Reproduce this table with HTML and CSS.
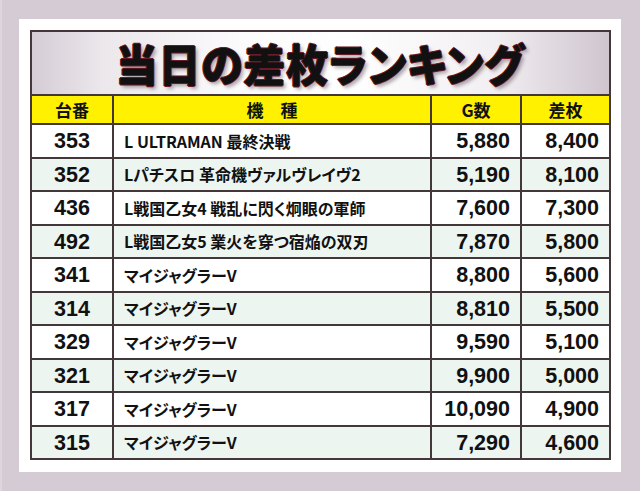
FILE: index.html
```html
<!DOCTYPE html>
<html lang="ja">
<head>
<meta charset="utf-8">
<link rel="stylesheet" href="styles.css">
</head>
<body>
<div class="panel">
  <table class="rank">
    <colgroup>
      <col class="c1"><col class="c2"><col class="c3"><col class="c4">
    </colgroup>
    <thead>
      <tr class="title-row"><th colspan="4" class="title"><span>当日の差枚ランキング</span></th></tr>
      <tr class="head">
        <th>台番</th><th>機　種</th><th>G数</th><th>差枚</th>
      </tr>
    </thead>
    <tbody>
      <tr><td class="no">353</td><td class="name">L ULTRAMAN 最終決戦</td><td class="num">5,880</td><td class="num">8,400</td></tr>
      <tr class="alt"><td class="no">352</td><td class="name">Lパチスロ 革命機ヴァルヴレイヴ2</td><td class="num">5,190</td><td class="num">8,100</td></tr>
      <tr><td class="no">436</td><td class="name">L戦国乙女4 戦乱に閃く炯眼の軍師</td><td class="num">7,600</td><td class="num">7,300</td></tr>
      <tr class="alt"><td class="no">492</td><td class="name">L戦国乙女5 業火を穿つ宿焔の双刃</td><td class="num">7,870</td><td class="num">5,800</td></tr>
      <tr><td class="no">341</td><td class="name">マイジャグラーV</td><td class="num">8,800</td><td class="num">5,600</td></tr>
      <tr class="alt"><td class="no">314</td><td class="name">マイジャグラーV</td><td class="num">8,810</td><td class="num">5,500</td></tr>
      <tr><td class="no">329</td><td class="name">マイジャグラーV</td><td class="num">9,590</td><td class="num">5,100</td></tr>
      <tr class="alt"><td class="no">321</td><td class="name">マイジャグラーV</td><td class="num">9,900</td><td class="num">5,000</td></tr>
      <tr><td class="no">317</td><td class="name">マイジャグラーV</td><td class="num">10,090</td><td class="num">4,900</td></tr>
      <tr class="alt"><td class="no">315</td><td class="name">マイジャグラーV</td><td class="num">7,290</td><td class="num">4,600</td></tr>
    </tbody>
  </table>
</div>
</body>
</html>
```

FILE: styles.css
```css
html, body {
  margin: 0;
  padding: 0;
}
body {
  background: #d4cbd4;
  width: 640px;
  height: 491px;
  overflow: hidden;
  border-left: 2px solid #ddd6dd;
  box-sizing: border-box;
  padding: 19px 0 0 17px;
  font-family: "Noto Sans CJK JP", "Liberation Sans", sans-serif;
}
.panel {
  width: 602px;
  height: 453px;
  box-sizing: border-box;
  background: #ffffff;
  padding: 11px 12px 14px 11px;
}
.rank {
  width: 579px;
  border-collapse: collapse;
  table-layout: fixed;
  border: 2px solid #3a2e2e;
}
.c1 { width: 82px; }
.c2 { width: 318px; }
.c3 { width: 90px; }
.c4 { width: 89px; }
.rank th, .rank td {
  border: 2px solid #43373a;
  padding: 0;
}
.title {
  height: 62px;
  background: linear-gradient(90deg, #d5ccd5 0%, #ebe7eb 12%, #fbfafb 35%, #ffffff 55%, #f2eff2 80%, #cfc5cf 100%);
  text-align: center;
  vertical-align: middle;
}
.title span {
  display: inline-block;
  font-family: "Noto Sans CJK JP", sans-serif;
  font-weight: 900;
  font-size: 44px;
  line-height: 1;
  color: #111111;
  font-feature-settings: "palt";
  letter-spacing: 1px;
  transform: scaleX(0.95);
  text-shadow:
    1px 0 0 #6a1a28, -1px 0 0 #6a1a28, 0 1px 0 #6a1a28, 0 -1px 0 #6a1a28,
    3px 3px 4px rgba(60, 40, 50, 0.4);
  margin-top: 2px;
}
.head th {
  height: 27px;
  background: #fff100;
  font-size: 17px;
  font-weight: 700;
  color: #111;
  text-align: center;
  vertical-align: middle;
  line-height: 1;
}
tbody td {
  height: 31.5px;
  vertical-align: middle;
  color: #111;
  line-height: 1;
}
tbody tr { background: #ffffff; }
tbody tr.alt { background: #edf5f0; }
.no {
  text-align: center;
  font-family: "Liberation Sans", Arial, sans-serif;
  font-weight: 700;
  font-size: 21.5px;
  padding-top: 2px !important;
  height: 29.5px !important;
}
.name {
  padding-left: 10px !important;
  font-size: 16px;
  font-weight: 700;
  font-feature-settings: "palt";
  white-space: nowrap;
  overflow: hidden;
}
.num {
  text-align: right;
  padding-right: 10px !important;
  padding-top: 2px !important;
  height: 29.5px !important;
  font-family: "Liberation Sans", Arial, sans-serif;
  font-weight: 700;
  font-size: 21.5px;
}
```
